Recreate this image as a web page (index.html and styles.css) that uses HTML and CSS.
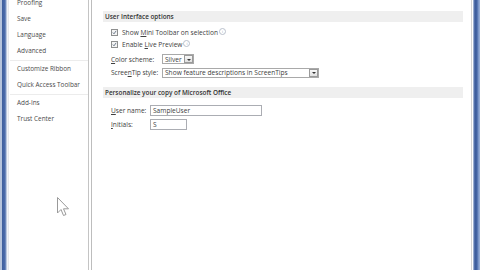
FILE: index.html
```html
<!DOCTYPE html>
<html>
<head>
<meta charset="utf-8">
<link rel="stylesheet" href="styles.css">
</head>
<body>
<div class="window">
  <div class="frame-left"></div>
  <nav class="nav">
    <div class="nav-item first">Proofing</div>
    <div class="nav-item">Save</div>
    <div class="nav-item">Language</div>
    <div class="nav-item">Advanced</div>
    <div class="nav-sep"></div>
    <div class="nav-item">Customize Ribbon</div>
    <div class="nav-item">Quick Access Toolbar</div>
    <div class="nav-sep"></div>
    <div class="nav-item">Add-Ins</div>
    <div class="nav-item">Trust Center</div>
  </nav>
  <div class="divider"></div>
  <main class="content">
    <div class="section-head">User Interface options</div>
    <div class="section-body section-ui">
      <div class="row check-row">
        <span class="checkbox"><svg width="7" height="7" viewBox="0 0 7 7"><path d="M1.2 3.6 L2.8 5.3 L5.8 1.2" fill="none" stroke="#4a5a70" stroke-width="1.1"/></svg></span>
        <span class="label">Show <u>M</u>ini Toolbar on selection</span>
        <span class="info">i</span>
      </div>
      <div class="row check-row">
        <span class="checkbox"><svg width="7" height="7" viewBox="0 0 7 7"><path d="M1.2 3.6 L2.8 5.3 L5.8 1.2" fill="none" stroke="#4a5a70" stroke-width="1.1"/></svg></span>
        <span class="label">Enable <u>L</u>ive Preview</span>
        <span class="info">i</span>
      </div>
      <div class="row field-row first-field">
        <span class="field-label"><u>C</u>olor scheme:</span>
        <span class="select select-short"><span class="select-text">Silver</span><span class="drop"></span></span>
      </div>
      <div class="row field-row">
        <span class="field-label">Scree<u>n</u>Tip style:</span>
        <span class="select select-long"><span class="select-text">Show feature descriptions in ScreenTips</span><span class="drop"></span></span>
      </div>
    </div>
    <div class="section-head">Personalize your copy of Microsoft Office</div>
    <div class="section-body section-user">
      <div class="row input-row">
        <span class="input-label"><u>U</u>ser name:</span>
        <span class="input input-long">SampleUser</span>
      </div>
      <div class="row input-row">
        <span class="input-label"><u>I</u>nitials:</span>
        <span class="input input-short">S</span>
      </div>
    </div>
  </main>
  <div class="frame-right"></div>
</div>
<svg class="cursor" width="13" height="20" viewBox="0 0 13 20"><path d="M0.5 0.5 L0.5 16 L4 12.5 L6.5 18.5 L9 17.5 L6.5 11.8 L11.5 11.8 Z" fill="#fff" stroke="#9a9a9a" stroke-width="1"/></svg>
</body>
</html>
```
FILE: styles.css
```css
html, body {
  margin: 0;
  padding: 0;
  width: 480px;
  height: 270px;
  overflow: hidden;
  background: #fff;
  font-family: "Open Sans", "Liberation Sans", sans-serif;
  color: #404040;
}
.window {
  display: flex;
  width: 480px;
  height: 270px;
}
.frame-left {
  width: 8px;
  flex: none;
  background: linear-gradient(to right, #b6c4dc 0, #b6c4dc 2px, #3f5f9d 2px, #4c6cac 5px, #8ea4cc 6px, #e4e9f1 7px, #fff 8px);
}
.nav {
  width: 79px;
  flex: none;
  border-left: 1px solid #e6e8ec;
  border-right: 1px solid #c4c4c4;
  font-size: 6.4px;
  color: #4a4a4a;
}
.nav-item {
  height: 16px;
  line-height: 16px;
  padding-left: 8px;
  white-space: nowrap;
}
.nav-item.first {
  margin-top: -5px;
}
.nav-sep {
  height: 1px;
  margin: 1px 0 0 1px;
  background: #ececec;
}
.divider {
  width: 1px;
  flex: none;
  margin-left: 2px;
  background: #bdbdbd;
}
.content {
  flex: none;
  width: 360px;
  padding-left: 11px;
  padding-top: 11px;
  font-size: 6.6px;
}
.section-head {
  height: 11px;
  line-height: 11px;
  background: #efefef;
  padding-left: 2px;
  font-size: 6.4px;
  font-weight: 600;
  color: #333;
  white-space: nowrap;
}
.section-body {
  padding-left: 8px;
}
.section-ui {
  padding-top: 4px;
  padding-bottom: 7px;
}
.section-user {
  padding-top: 6px;
}
.row {
  display: flex;
  align-items: center;
  white-space: nowrap;
}
.check-row {
  height: 12px;
}
.checkbox {
  width: 7px;
  height: 7px;
  border: 1px solid #8e8f8f;
  background: #f4f4f4;
  box-sizing: border-box;
  display: flex;
  align-items: center;
  justify-content: center;
  margin-right: 4px;
}
.checkbox svg {
  display: block;
}
.info {
  width: 5px;
  height: 5px;
  border: 1px solid #b9c0cc;
  border-radius: 50%;
  font-size: 4px;
  line-height: 5px;
  text-align: center;
  color: #8fa0b8;
  margin-left: 1px;
  margin-top: -2px;
}
.field-row {
  height: 13.5px;
}
.first-field {
  margin-top: 2.5px;
}
.field-label {
  width: 51px;
  flex: none;
  letter-spacing: -0.05px;
}
.select {
  display: flex;
  align-items: center;
  height: 10px;
  border: 1px solid #a9a9a9;
  box-sizing: border-box;
  padding-left: 2px;
  justify-content: space-between;
}
.select-short { width: 32px; }
.select-long { width: 157px; }
.drop {
  width: 9px;
  height: 8px;
  border: 1px solid #9a9a9a;
  background: linear-gradient(#f8f8f8, #e0e0e0);
  box-sizing: border-box;
  position: relative;
}
.drop::after {
  content: "";
  position: absolute;
  left: 2px;
  top: 2.5px;
  border-left: 2px solid transparent;
  border-right: 2px solid transparent;
  border-top: 2px solid #333;
}
.input-row {
  height: 14px;
}
.input-label {
  width: 39px;
}
.input {
  height: 11px;
  line-height: 9px;
  border: 1px solid #abadb3;
  box-sizing: border-box;
  padding-left: 2px;
}
.input-long { width: 112px; }
.input-short { width: 37px; }
.frame-right {
  flex: 1;
  background: linear-gradient(to right, #fff 0, #fff 8px, #d4d4d4 8px, #d4d4d4 9px, #fff 9px, #fff 10px, #c9d3e4 10px, #6a86bc 11px, #3c5b9a 12px, #4565a4 14px, #6f8cc2 15px, #9fb3d8 17px);
}
.cursor {
  position: absolute;
  left: 57px;
  top: 197px;
}
```
